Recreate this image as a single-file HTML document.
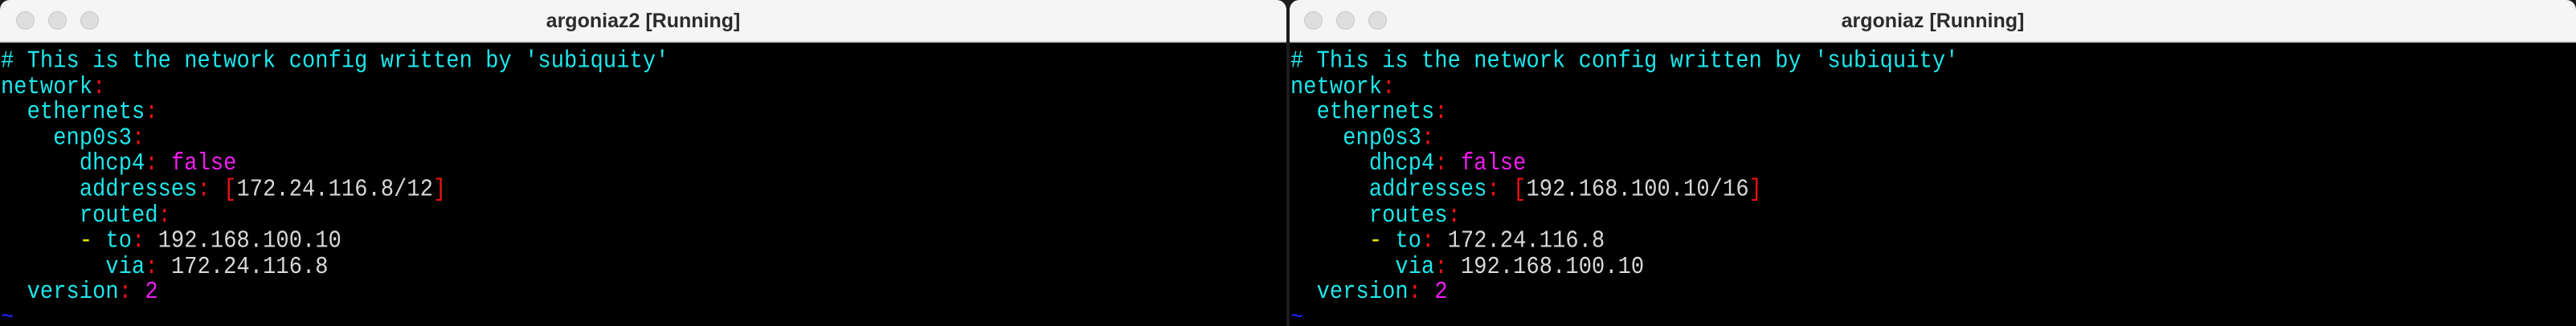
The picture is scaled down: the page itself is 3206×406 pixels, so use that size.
<!DOCTYPE html>
<html><head><meta charset="utf-8"><style>
html,body{margin:0;padding:0;width:3206px;height:406px;overflow:hidden;background:#1c1c1e;}
.win{position:absolute;top:0;height:406px;background:#000;overflow:hidden;border-radius:12px 12px 0 0;}
.tb{position:absolute;left:0;right:0;top:0;height:51px;background:#f5f5f5;border-bottom:2px solid #d4d4d4;}
.c{position:absolute;top:14px;width:23px;height:23px;border-radius:50%;background:#dedede;border:1px solid #c8c8c8;box-sizing:border-box;}
.t{position:absolute;left:0;right:0;top:0;height:51px;text-align:center;font:bold 25px "Liberation Sans",sans-serif;line-height:52px;color:#2b2b2b;}
pre{position:absolute;left:1px;top:61px;margin:0;font:27px "Liberation Mono",monospace;line-height:28.6px;letter-spacing:0.1px;color:#1ee6ea;transform:scaleY(1.12);transform-origin:0 0;}
.r{color:#f01010}.m{color:#f01cf0}.g{color:#d8d8d8}.y{color:#f0f000}.b{color:#2020ff}
</style></head><body>
<div class="win" style="left:0;width:1601px;">
<div class="tb"><div class="c" style="left:20px"></div><div class="c" style="left:60px"></div><div class="c" style="left:100px"></div><div class="t">argoniaz2 [Running]</div></div>
<pre># This is the network config written by 'subiquity'
network<span class="r">:</span>
  ethernets<span class="r">:</span>
    enp0s3<span class="r">:</span>
      dhcp4<span class="r">:</span> <span class="m">false</span>
      addresses<span class="r">:</span> <span class="r">[</span><span class="g">172.24.116.8/12</span><span class="r">]</span>
      routed<span class="r">:</span>
      <span class="y">-</span> to<span class="r">:</span> <span class="g">192.168.100.10</span>
        via<span class="r">:</span> <span class="g">172.24.116.8</span>
  version<span class="r">:</span> <span class="m">2</span>
<span class="b">~</span></pre>
</div>
<div class="win" style="left:1605px;width:1601px;">
<div class="tb"><div class="c" style="left:18px"></div><div class="c" style="left:58px"></div><div class="c" style="left:98px"></div><div class="t">argoniaz [Running]</div></div>
<pre># This is the network config written by 'subiquity'
network<span class="r">:</span>
  ethernets<span class="r">:</span>
    enp0s3<span class="r">:</span>
      dhcp4<span class="r">:</span> <span class="m">false</span>
      addresses<span class="r">:</span> <span class="r">[</span><span class="g">192.168.100.10/16</span><span class="r">]</span>
      routes<span class="r">:</span>
      <span class="y">-</span> to<span class="r">:</span> <span class="g">172.24.116.8</span>
        via<span class="r">:</span> <span class="g">192.168.100.10</span>
  version<span class="r">:</span> <span class="m">2</span>
<span class="b">~</span></pre>
</div>
</body></html>
